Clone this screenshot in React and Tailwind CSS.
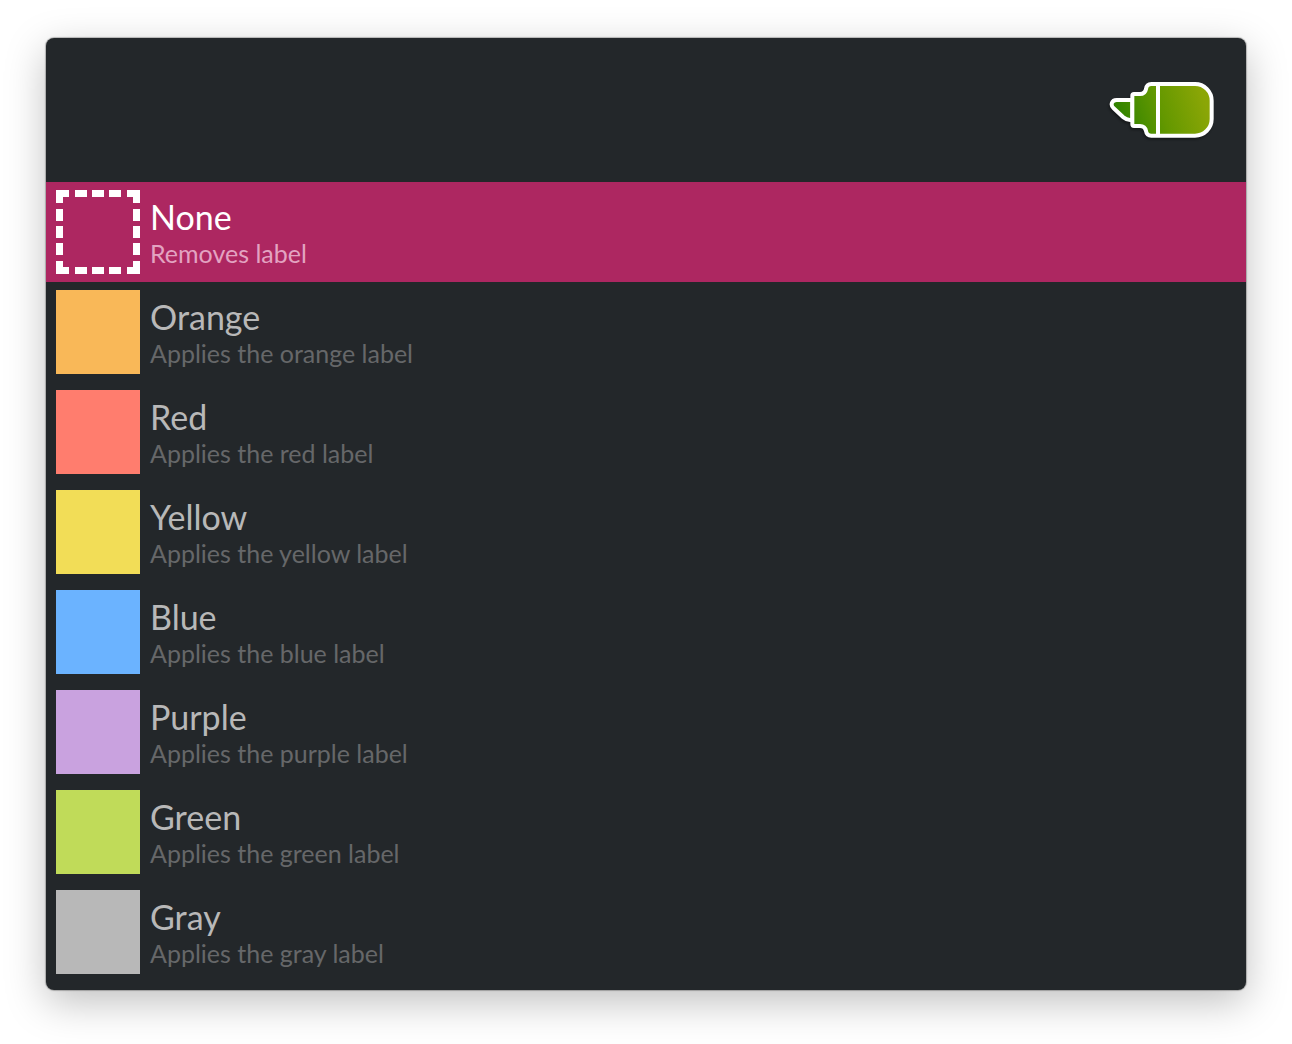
import { useState } from "react";

const labels = [
  { name: "None", hint: "Removes label" },
  { name: "Orange", hint: "Applies the orange label", swatch: "bg-[#f9b858]" },
  { name: "Red", hint: "Applies the red label", swatch: "bg-[#ff7d6e]" },
  { name: "Yellow", hint: "Applies the yellow label", swatch: "bg-[#f2dd57]" },
  { name: "Blue", hint: "Applies the blue label", swatch: "bg-[#6bb3ff]" },
  { name: "Purple", hint: "Applies the purple label", swatch: "bg-[#c9a2df]" },
  { name: "Green", hint: "Applies the green label", swatch: "bg-[#c0db59]" },
  { name: "Gray", hint: "Applies the gray label", swatch: "bg-[#b8b8b8]" },
];

function MarkerIcon() {
  return (
    <svg viewBox="54 60 324 180" className="h-[60px] w-[108px] shrink-0 overflow-visible drop-shadow-[-1px_2px_1px_rgba(0,0,0,0.35)]" aria-hidden="true">
      <defs>
        <linearGradient id="ink" gradientUnits="userSpaceOnUse" x1="90" y1="190" x2="340" y2="110">
          <stop offset="0" stopColor="#2f8200" />
          <stop offset="0.5" stopColor="#649800" />
          <stop offset="1" stopColor="#8ba606" />
        </linearGradient>
      </defs>
      <g fill="url(#ink)" stroke="#fff" strokeWidth="12" strokeLinejoin="round">
        <path d="M127 120H80C65 120 60 135 71 145L100 172Q109 180 120 180H127Z" />
        <path d="M132 102H150Q165 102 168 87Q170 72 184 72H315A50 50 0 0 1 365 122V177A50 50 0 0 1 315 227H184Q170 227 168 213Q165 198 150 198H132Q127 198 127 193V107Q127 102 132 102Z" />
        <path d="M204 72V227" />
      </g>
    </svg>
  );
}

function EmptySwatch() {
  return (
    <svg viewBox="0 0 84 84" className="size-[84px] shrink-0" aria-hidden="true">
      <path
        d="M0 3.5H84M0 80.5H84M3.5 0V84M80.5 0V84"
        stroke="#fff"
        strokeWidth="7"
        strokeDasharray="13 6 12 5 12 5 12 6 13 0"
      />
    </svg>
  );
}

export default function App() {
  const [selected, setSelected] = useState(0);
  return (
    <div className="min-h-screen bg-white px-[46px] pt-[38px] pb-[54px] font-['Lato',sans-serif]">
      <main className="overflow-hidden rounded-lg bg-[#23272a] pb-2 shadow-[0_0_1px_1px_rgba(0,0,0,0.25),0_12px_40px_rgba(0,0,0,0.25)]">
        <header className="flex h-36 items-center pr-[30px] pl-[10px]">
          <input
            type="text"
            aria-label="Search labels"
            className="h-20 min-w-0 flex-1 bg-transparent text-[34px] text-[#b8b8b8] outline-none"
          />
          <MarkerIcon />
        </header>
        <ul>
          {labels.map((label, i) => {
            const active = i === selected;
            return (
              <li key={label.name}>
                <button
                  type="button"
                  aria-pressed={active}
                  onClick={() => setSelected(i)}
                  className={`flex w-full gap-[10px] px-[10px] py-2 text-left ${active ? "bg-[#ad2761]" : ""}`}
                >
                  {label.swatch ? <span className={`size-[84px] shrink-0 ${label.swatch}`} /> : <EmptySwatch />}
                  <span className="flex flex-col pt-[7px]">
                    <span className={`text-[34px] leading-10 ${active ? "text-white" : "text-[#b8b8b8]"}`}>{label.name}</span>
                    <span className={`text-[25px] leading-8 ${active ? "text-[#e3a3c1]" : "text-[#666769]"}`}>{label.hint}</span>
                  </span>
                </button>
              </li>
            );
          })}
        </ul>
      </main>
    </div>
  );
}
